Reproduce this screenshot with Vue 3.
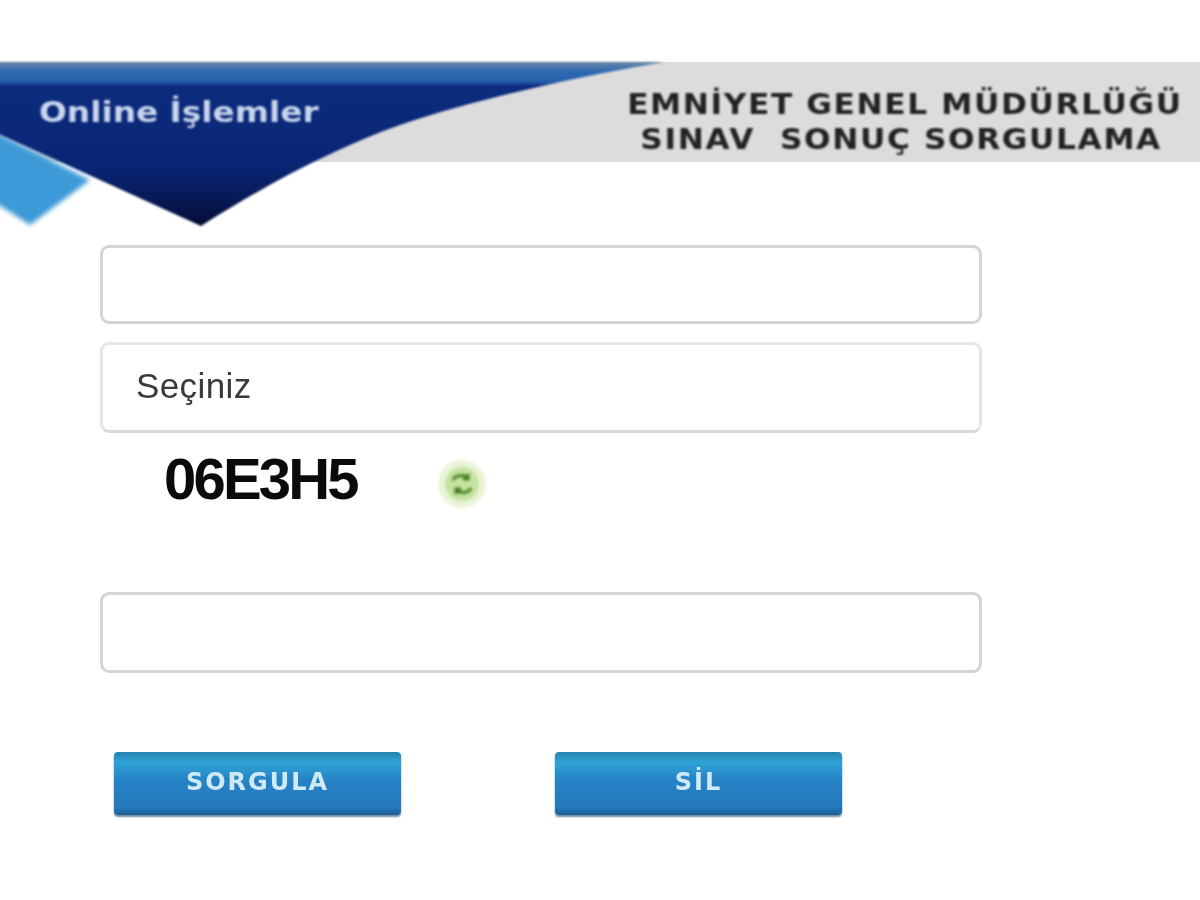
<script setup>
const buttons = ['SORGULA', 'SİL']
</script>

<template>
  <div class="page">
    <header class="banner">
      <svg class="swoosh" viewBox="-12 0 682 170" width="682" height="170" aria-hidden="true">
        <defs>
          <linearGradient id="navy" x1="0" y1="0" x2="0" y2="1">
            <stop offset="0" stop-color="#6d88aa" />
            <stop offset="0.03" stop-color="#4a78ae" />
            <stop offset="0.06" stop-color="#2f68b0" />
            <stop offset="0.12" stop-color="#2a5fac" />
            <stop offset="0.145" stop-color="#0c2c7e" />
            <stop offset="0.65" stop-color="#0a2474" />
            <stop offset="1" stop-color="#050d38" />
          </linearGradient>
        </defs>
        <path class="sky" d="M-12 67 L90 118 L30 163 L-12 136 Z" fill="#3c9ad8" />
        <path d="M-12 0 L665 0 C580 14 480 36 400 63 C340 84 270 120 201 164 L-12 67 Z" fill="url(#navy)" />
      </svg>
      <div class="online">Online İşlemler</div>
      <div class="title">
        <div>EMNİYET GENEL MÜDÜRLÜĞÜ</div>
        <div class="second">SINAV&nbsp; SONUÇ SORGULAMA</div>
      </div>
    </header>

    <main class="form">
      <div class="field first"></div>
      <div class="field select"><span>Seçiniz</span></div>
      <div class="captcha-row">
        <span class="captcha">06E3H5</span>
        <span class="refresh">
          <svg viewBox="0 0 50 50" width="50" height="50" aria-hidden="true">
            <circle cx="25" cy="25" r="24" fill="#e8f4d6" />
            <circle cx="25" cy="25" r="17" fill="#c6e3a0" />
            <path d="M16 21 C18 16 27 15 31 19 M31 15 V20 H26 M34 29 C32 34 23 35 19 31 M19 35 V30 H24" fill="none" stroke="#3f7d1e" stroke-width="3" />
          </svg>
        </span>
      </div>
      <div class="field code"></div>
      <div class="actions">
        <button v-for="b in buttons" :key="b" class="btn" type="button">{{ b }}</button>
      </div>
    </main>
  </div>
</template>

<style scoped>
.page {
  width: 1200px;
  height: 900px;
  background: #fff;
  padding-top: 62px;
  box-sizing: border-box;
  overflow: hidden;
  font-family: "Liberation Sans", Arial, sans-serif;
}
.banner {
  position: relative;
  height: 100px;
  background: #dcdcdc;
  display: flex;
  justify-content: flex-end;
}
.swoosh {
  position: absolute;
  left: -12px;
  top: 0;
  filter: blur(1px);
}
.sky {
  filter: blur(2px);
}
.online {
  position: absolute;
  left: 39px;
  top: 33px;
  color: #c9d6ee;
  font: bold 29px/34px "DejaVu Sans", sans-serif;
  white-space: nowrap;
  transform-origin: left center;
  transform: scaleX(1.13);
  filter: blur(0.9px);
}
.title {
  width: 556px;
  margin-top: 25px;
  margin-right: 17px;
  color: #222;
  font: bold 29px/35px "DejaVu Sans", sans-serif;
  letter-spacing: 1.5px;
  text-align: center;
  white-space: nowrap;
  display: flex;
  flex-direction: column;
  align-items: center;
  filter: blur(0.8px);
}
.title div {
  transform: scaleX(1.077);
}
.title .second {
  margin-right: 8px;
}
.form {
  margin-left: 100px;
  width: 882px;
  padding-top: 83px;
  display: flex;
  flex-direction: column;
}
.field {
  box-sizing: border-box;
  background: #fff;
  border: 3px solid #d4d4d4;
  border-radius: 9px;
  filter: blur(0.7px);
}
.first {
  height: 79px;
}
.select {
  height: 91px;
  margin-top: 18px;
  padding: 0 0 3px 33px;
  display: flex;
  align-items: center;
  border-color: #e6e6e6;
  border-bottom-color: #d8d8d8;
  color: #3a3a3a;
  font-size: 35px;
  letter-spacing: 0.4px;
}
.select span {
  filter: blur(0.6px);
}
.captcha-row {
  height: 70px;
  margin-top: 17px;
  margin-bottom: 72px;
  display: flex;
  align-items: center;
  padding-left: 64px;
}
.captcha {
  width: 273px;
  color: #0b0b0b;
  font: bold 58px/60px "Liberation Sans", sans-serif;
  letter-spacing: -2.8px;
  margin-top: -12px;
  filter: blur(0.7px);
}
.refresh {
  display: flex;
  margin-top: -2px;
  filter: blur(1.4px);
}
.code {
  height: 81px;
}
.actions {
  margin-top: 79px;
  margin-left: 14px;
  display: flex;
  gap: 154px;
}
.btn {
  width: 287px;
  height: 63px;
  padding: 0 0 4px;
  border: none;
  border-radius: 4px;
  background: linear-gradient(#2581ae 0%, #2fa4d6 16%, #2582c4 45%, #2578bc 88%, #1c5f94 100%);
  box-shadow: 0 2px 2px #6f8ca5;
  color: #cfeaf6;
  font: bold 24px/30px "DejaVu Sans", sans-serif;
  letter-spacing: 2px;
  filter: blur(0.7px);
}
</style>
